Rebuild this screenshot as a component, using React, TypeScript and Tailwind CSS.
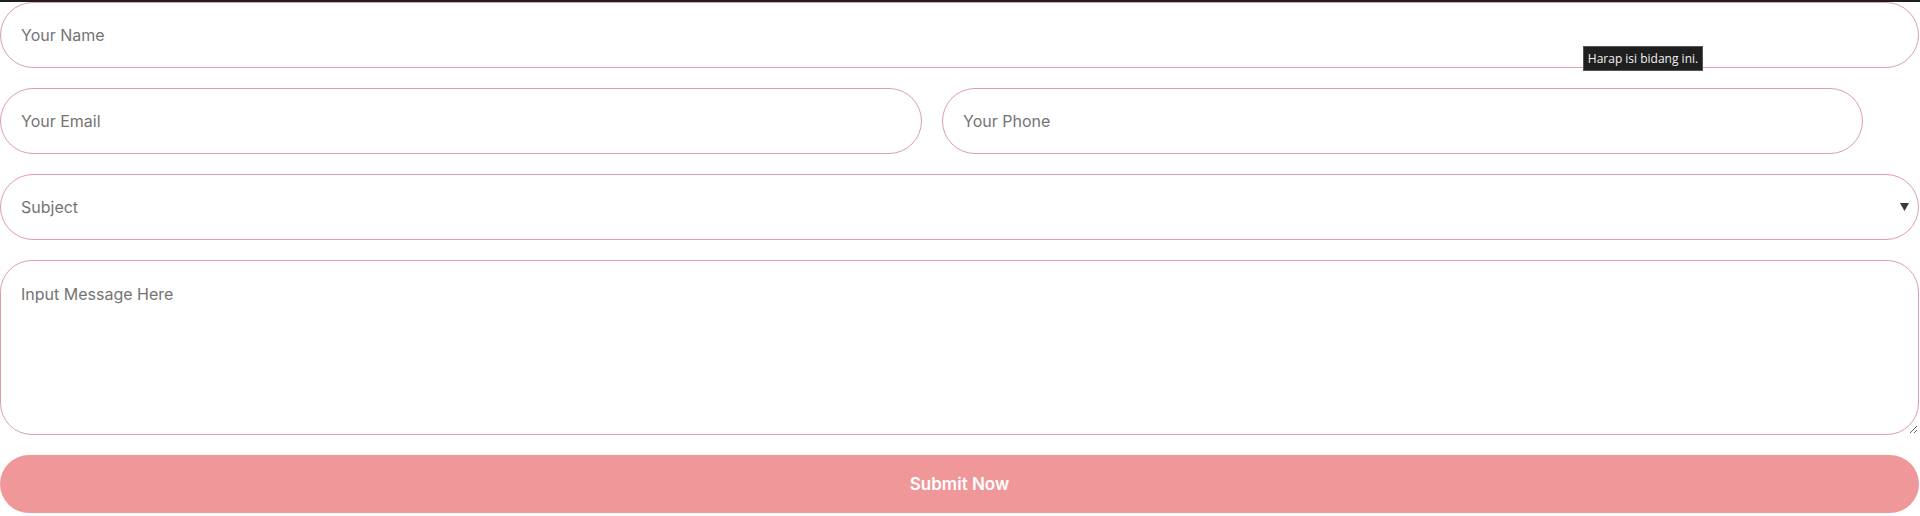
export default function App() {
  const field =
    "h-[66px] rounded-full border border-[#dc9fa5] bg-white px-[20px] text-[16px] text-[#666] outline-none placeholder:text-[#747474]";
  return (
    <div
      className="relative w-[1920px] h-[516px] bg-white overflow-hidden"
      style={{ fontFamily: "Inter, 'Open Sans', sans-serif" }}
    >
      {/* top edge */}
      <div className="h-[2px] bg-[#1e1e1e]" />

      <form className="flex flex-col gap-[20px] w-[1919px]">
        <input className={`${field} w-full`} placeholder="Your Name" />

        <div className="flex gap-[20px]">
          <input className={`${field} w-[922px]`} placeholder="Your Email" />
          <input className={`${field} w-[921px]`} placeholder="Your Phone" />
        </div>

        <div className={`${field} w-full flex items-center justify-between pr-[8px]`}>
          <span className="text-[#747474]">Subject</span>
          <svg width="9" height="8" viewBox="0 0 9 8" className="mr-[1px]">
            <path d="M0 0 H9 L4.5 8 Z" fill="#3a3a3a" />
          </svg>
        </div>

        <textarea
          className="h-[175px] w-full rounded-[32px] border border-[#dc9fa5] bg-white px-[20px] pt-[21px] text-[16px] text-[#666] outline-none placeholder:text-[#747474]"
          placeholder="Input Message Here"
        />

        <button
          type="button"
          className="h-[58px] w-full rounded-full bg-[#f0979a] pt-[2px] text-[17px] font-semibold text-white"
        >
          Submit Now
        </button>
      </form>

      {/* validation tooltip */}
      <div
        className="absolute left-[1583px] top-[46px] h-[25px] w-[120px] flex items-center justify-center border border-[#555] bg-[#1f1f1f] text-[12px] text-[#f2f2f2]"
        style={{ fontFamily: "'Open Sans', 'DejaVu Sans', sans-serif" }}
      >
        Harap isi bidang ini.
      </div>
    </div>
  );
}
